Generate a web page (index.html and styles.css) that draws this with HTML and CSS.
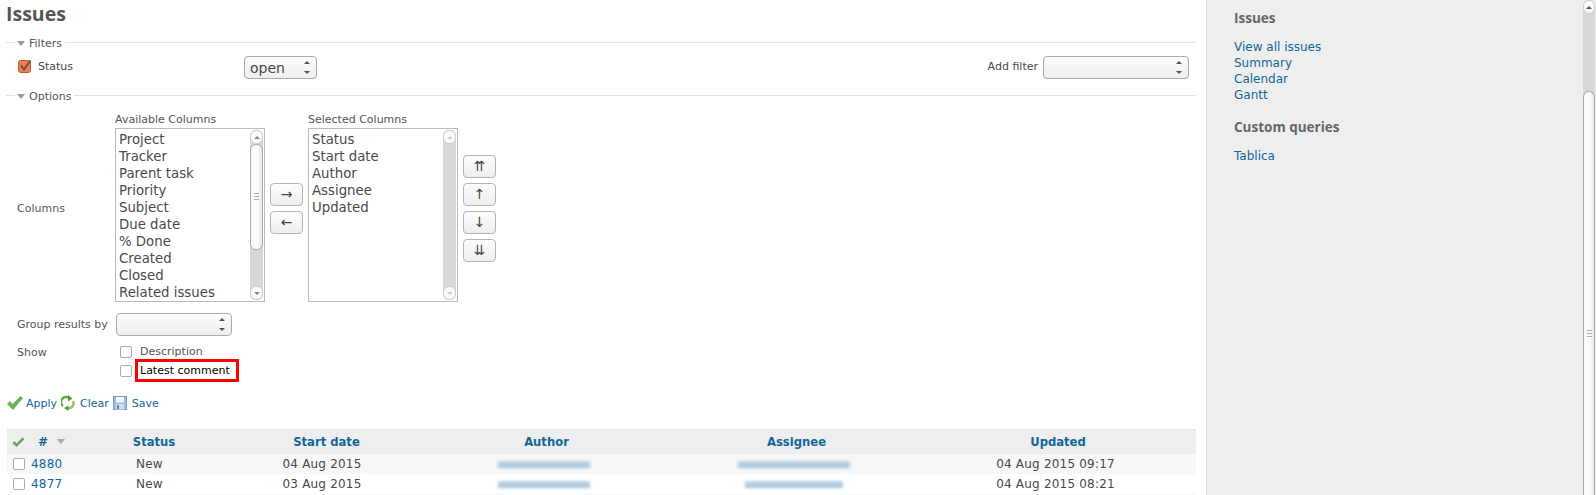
FILE: index.html
```html
<!DOCTYPE html>
<html lang="en">
<head>
  <meta charset="UTF-8" />
  <title>Issues</title>
  <link rel="stylesheet" href="styles.css">
</head>
<body>
  <div class="page">
    <main class="content">
      <h2>Issues</h2>

      <div class="legend"><span class="dash"></span><span class="tri"></span><span>Filters</span><span class="rule"></span></div>
      <div class="filter-row">
        <svg class="status-check" width="14" height="14" viewBox="0 0 14 14">
          <rect x="0.5" y="1.5" width="12" height="12" rx="2" fill="#ee7f55" stroke="#c9572d"/>
          <path d="M3 6.500l3 4L12.500 1.500" fill="none" stroke="#5a5048" stroke-width="1.800"/>
        </svg>
        <span class="status-label">Status</span>
        <div class="select select-open">open<span class="updown"></span></div>
        <span class="add-label">Add filter</span>
        <div class="select select-add"><span class="updown"></span></div>
      </div>

      <div class="legend legend-options"><span class="dash"></span><span class="tri"></span><span>Options</span><span class="rule"></span></div>
      <div class="columns-row">
        <span class="row-label">Columns</span>
        <div class="picker">
          <div class="caption">Available Columns</div>
          <div class="listbox">
            <ul>
              <li>Project</li><li>Tracker</li><li>Parent task</li><li>Priority</li><li>Subject</li>
              <li>Due date</li><li>% Done</li><li>Created</li><li>Closed</li><li>Related issues</li>
            </ul>
            <div class="sb">
              <span class="sb-cap"><i class="up"></i></span>
              <span class="sb-track"><span class="sb-thumb list-thumb"><b class="grip"></b></span></span>
              <span class="sb-cap"><i class="down"></i></span>
            </div>
          </div>
        </div>
        <div class="move-btns">
          <button>→</button>
          <button>←</button>
        </div>
        <div class="picker">
          <div class="caption">Selected Columns</div>
          <div class="listbox">
            <ul>
              <li>Status</li><li>Start date</li><li>Author</li><li>Assignee</li><li>Updated</li>
            </ul>
            <div class="sb">
              <span class="sb-cap"><i class="up off"></i></span>
              <span class="sb-track"></span>
              <span class="sb-cap"><i class="down off"></i></span>
            </div>
          </div>
        </div>
        <div class="move-btns">
          <button>⇈</button>
          <button>↑</button>
          <button>↓</button>
          <button>⇊</button>
        </div>
      </div>

      <div class="group-row">
        <span class="row-label">Group results by</span>
        <div class="select select-group"><span class="updown"></span></div>
      </div>

      <div class="show-row">
        <span class="row-label">Show</span>
        <div class="show-opts">
          <label class="opt"><span class="box"></span><span>Description</span></label>
          <label class="opt"><span class="box"></span><span class="marked">Latest comment</span></label>
        </div>
      </div>

      <div class="actions">
        <svg width="16" height="14" viewBox="0 0 16 14"><path d="M0.500 8L3 5.500l2.500 3L13.500 0.500 15.500 2 6 13.500z" fill="#63b84f" stroke="#4d9440" stroke-width="0.600"/></svg>
        <a href="#">Apply</a>
        <svg class="ico-clear" width="14" height="16" viewBox="0 0 14 16"><path d="M2 11a5 5 0 0 1 6-8" fill="none" stroke="#6aa84a" stroke-width="2.400"/><path d="M7 0l4.500 3.500L7 6.500z" fill="#4f9a35"/><path d="M12 6a5 5 0 0 1-6 7" fill="none" stroke="#8cc46a" stroke-width="2.400"/><path d="M7.500 10.500L3 13l4.500 3z" fill="#4f9a35"/></svg>
        <a href="#">Clear</a>
        <svg class="ico-save" width="14" height="14" viewBox="0 0 14 14"><rect x="0.500" y="0.500" width="13" height="13" fill="#9bbbe0" stroke="#7b9cc6"/><rect x="3" y="1" width="8" height="5.500" fill="#f2f5f9"/><rect x="3" y="8" width="8" height="5.500" fill="#d3deeb"/><rect x="4" y="9" width="2" height="4" fill="#5a7fb0"/></svg>
        <a href="#">Save</a>
      </div>

      <div class="issues">
        <div class="issue-row head">
          <span class="cell-check"><svg width="13" height="11" viewBox="0 0 13 11"><path d="M0.500 6L2.500 4l2 2.500L10.500 0.500 12.500 2 4.500 10z" fill="#62a85a"/></svg></span>
          <span class="cell-id"># <i class="sort"></i></span>
          <a href="#" class="th">Status</a>
          <a href="#" class="th">Start date</a>
          <a href="#" class="th tight">Author</a>
          <a href="#" class="th tight">Assignee</a>
          <a href="#" class="th tight">Updated</a>
        </div>
        <div class="issue-row odd">
          <span class="cell-check"><span class="box"></span></span>
          <a href="#" class="id">4880</a>
          <span>New</span>
          <span>04 Aug 2015</span>
          <span><span class="smear smear-a"></span></span>
          <span><span class="smear smear-b"></span></span>
          <span>04 Aug 2015 09:17</span>
        </div>
        <div class="issue-row">
          <span class="cell-check"><span class="box"></span></span>
          <a href="#" class="id">4877</a>
          <span>New</span>
          <span>03 Aug 2015</span>
          <span><span class="smear smear-a"></span></span>
          <span><span class="smear smear-c"></span></span>
          <span>04 Aug 2015 08:21</span>
        </div>
        <div class="issue-row odd row-cut"></div>
      </div>
    </main>

    <aside class="sidebar">
      <h3>Issues</h3>
      <a href="#">View all issues</a>
      <a href="#">Summary</a>
      <a href="#">Calendar</a>
      <a href="#">Gantt</a>
      <h3 class="queries">Custom queries</h3>
      <a href="#">Tablica</a>
    </aside>

    <div class="sb page-sb">
      <span class="sb-cap"><i class="up dark"></i></span>
      <span class="sb-track"><span class="sb-thumb page-thumb"><b class="grip"></b></span></span>
    </div>
  </div>
</body>
</html>
```

FILE: styles.css
```css
* {
  box-sizing: border-box;
}

html, body {
  margin: 0;
  height: 495px;
  overflow: hidden;
}

body {
  font-family: "DejaVu Sans", sans-serif;
  font-size: 11px;
  color: #484848;
  background: #eee;
}

a {
  color: #169;
  text-decoration: none;
}

.page {
  display: flex;
  height: 495px;
  overflow: hidden;
}

.content {
  width: 1207px;
  flex: none;
  background: #fff;
  border-right: 1px solid #ddd;
  padding-left: 6px;
  overflow: hidden;
}

h2 {
  margin: 0;
  height: 36px;
  font-family: "Open Sans", sans-serif;
  font-size: 19.5px;
  line-height: 27px;
  font-weight: 700;
  color: #555;
}

/* fieldset headers */
.legend {
  display: flex;
  align-items: center;
  height: 15px;
  width: 1190px;
  color: #555;
}

.legend-options {
  margin-top: 10px;
}

.dash {
  width: 9px;
  height: 1px;
  margin-top: -2px;
  background: #e2e2e2;
}

.rule {
  flex: 1;
  height: 1px;
  margin: -2px 0 0 3px;
  background: #e2e2e2;
}

.tri {
  width: 0;
  height: 0;
  margin: 0 4px 0 2px;
  border: 4px solid transparent;
  border-top: 5px solid #999;
  border-bottom: 0;
}

/* filters */
.filter-row {
  display: flex;
  align-items: center;
  width: 1183px;
  height: 23px;
  margin-top: 5px;
}

.status-check {
  margin-left: 12px;
  margin-top: -3px;
}

.status-label {
  margin-left: 6px;
  margin-top: -3px;
  width: 206px;
}

.add-label {
  margin-left: auto;
  margin-top: -3px;
  margin-right: 5px;
}

.select {
  position: relative;
  height: 23px;
  padding-left: 5px;
  border: 1px solid #aaa;
  border-radius: 4px;
  background: linear-gradient(#fdfdfd, #efeeec);
  font-size: 14px;
  line-height: 22px;
}

.select-open {
  width: 73px;
}

.select-add {
  width: 146px;
}

.select-group {
  width: 116px;
}

/* up/down arrows of a select */
.updown {
  position: absolute;
  right: 6px;
  top: 6px;
  width: 7px;
  height: 10px;
}

.updown::before,
.updown::after {
  content: "";
  position: absolute;
  left: 1px;
  border: 3px solid transparent;
}

.updown::before {
  top: -2px;
  border-bottom: 3px solid #555;
  border-top: 0;
}

.updown::after {
  bottom: -1px;
  border-top: 3px solid #555;
  border-bottom: 0;
}

/* column pickers */
.columns-row {
  display: flex;
  align-items: stretch;
  height: 188px;
  margin-top: 10px;
}

.row-label {
  width: 109px;
  flex: none;
  padding-left: 11px;
  color: #555;
}

.columns-row .row-label {
  align-self: center;
}

.caption {
  height: 14px;
  line-height: 11px;
  color: #555;
}

.listbox {
  display: flex;
  width: 150px;
  height: 174px;
  border: 1px solid #bbb;
  background: #fff;
}

.listbox ul {
  flex: 1;
  margin: 0;
  padding: 2px 0 0 3px;
  list-style: none;
  font-size: 13.3px;
  line-height: 17px;
  color: #4a4a4a;
}

.move-btns {
  display: flex;
  flex-direction: column;
  justify-content: center;
  gap: 5px;
  margin: 0 5px;
}

button {
  width: 33px;
  height: 23px;
  padding: 0;
  border: 1px solid #b5b5b5;
  border-radius: 4px;
  background: linear-gradient(#fdfdfd, #efeeec);
  font-family: "DejaVu Sans", sans-serif;
  font-size: 14px;
  color: #444;
}

/* fake gtk scrollbars */
.sb {
  display: flex;
  flex-direction: column;
  width: 13px;
  flex: none;
  margin: 1px 1px 1px 0;
  background: #d8d7d5;
  border-radius: 6px;
}

.sb-cap {
  display: flex;
  align-items: center;
  justify-content: center;
  height: 14px;
  flex: none;
  background: #fbfbfa;
  border: 1px solid #ccc;
  border-radius: 6px;
}

.sb-track {
  flex: 1;
  display: block;
  min-height: 0;
  overflow: hidden;
}

.sb-thumb {
  display: flex;
  align-items: center;
  justify-content: center;
  border: 1px solid #aaa;
  border-radius: 6px;
  background: linear-gradient(to right, #fbfbfa 60%, #e8e7e5);
}

.list-thumb {
  height: 106px;
}

.grip {
  width: 5px;
  height: 8px;
  background: repeating-linear-gradient(#aaa 0 1px, transparent 1px 3px);
}

.up, .down {
  width: 0;
  height: 0;
  border: 3px solid transparent;
}

.up {
  border-top: 0;
  border-bottom: 3px solid #888;
}

.down {
  border-bottom: 0;
  border-top: 3px solid #888;
}

.up.off {
  border-bottom-color: #ccc;
}

.down.off {
  border-top-color: #ccc;
}

.up.dark {
  border-bottom-color: #555;
}

.page-sb {
  width: 12px;
  margin: 0 1px 0 0;
  height: 495px;
}

.page-thumb {
  margin-top: 77px;
  height: 484px;
  border-bottom: 0;
  border-radius: 6px 6px 0 0;
}

/* lower form rows */
.group-row {
  display: flex;
  align-items: center;
  height: 23px;
  margin-top: 11px;
}

.group-row .row-label {
  width: 110px;
}

.show-row {
  display: flex;
  margin-top: 8px;
}

.show-row .row-label {
  padding-top: 2px;
}

.show-opts {
  display: flex;
  flex-direction: column;
  padding-left: 5px;
}

.opt {
  display: flex;
  align-items: center;
  height: 15px;
  gap: 8px;
  color: #555;
}

.opt + .opt {
  height: 23px;
  margin-top: 0;
}

.box {
  display: block;
  width: 12px;
  height: 12px;
  flex: none;
  border: 1px solid #aaa;
  border-radius: 2px;
  background: #fff;
}

.marked {
  margin-left: -5px;
  padding: 0 6px 0 2px;
  line-height: 17px;
  border: 3px solid #f00;
  color: #000;
}

.actions {
  display: flex;
  align-items: center;
  height: 16px;
  margin-top: 13px;
  padding-left: 1px;
}

.actions a {
  margin-left: 3px;
}

.actions .ico-clear + a,
.actions .ico-save + a {
  margin-left: 5px;
}

.ico-clear {
  margin-left: 4px;
}

.ico-save {
  margin-left: 4px;
}

/* issue table */
.issues {
  width: 1189px;
  margin-top: 18px;
  margin-left: 1px;
}

.issue-row {
  display: grid;
  grid-template-columns: 20px 47px 151px 194px 250px 250px 277px;
  align-items: center;
  height: 20px;
  text-align: center;
  font-size: 12px;
  letter-spacing: 0.2px;
  background: #fff;
}

.issue-row > :last-child {
  padding-right: 4px;
}

.issue-row.odd {
  background: #f6f7f8;
}

.issue-row.row-cut {
  height: 2px;
}

.issue-row.head {
  height: 25px;
  background: #eee;
  border-top: 1px solid #e4e4e4;
  font-size: 11.6px;
  font-weight: bold;
  letter-spacing: 0;
  color: #169;
}

.th {
  padding-left: 9px;
  font-weight: bold;
}

.th.tight {
  padding-left: 5px;
}

.cell-check {
  display: flex;
  justify-content: center;
  padding-left: 3px;
}

.cell-id {
  text-align: left;
  padding-left: 11px;
  font-size: 12px;
}

.sort {
  display: inline-block;
  width: 0;
  height: 0;
  margin-left: 5px;
  vertical-align: 2px;
  border: 4px solid transparent;
  border-top: 5px solid #aaa;
  border-bottom: 0;
}

.id {
  text-align: left;
  padding-left: 4px;
}

.smear {
  display: inline-block;
  height: 7px;
  vertical-align: middle;
  background: linear-gradient(#c3d6e6, #9fc0da);
  filter: blur(1.5px);
}

.smear-a {
  width: 92px;
}

.smear-b {
  width: 112px;
}

.smear-c {
  width: 98px;
}

/* sidebar */
.sidebar {
  display: flex;
  flex-direction: column;
  align-items: flex-start;
  width: 376px;
  flex: none;
  padding: 10px 0 0 27px;
  font-size: 12px;
  line-height: 16px;
}

h3 {
  margin: 0 0 13px;
  height: 16px;
  font-family: "Open Sans", sans-serif;
  font-size: 13.5px;
  line-height: 16px;
  font-weight: 700;
  color: #666;
}

.queries {
  margin-top: 16px;
  margin-bottom: 12px;
  height: 17px;
}
```
